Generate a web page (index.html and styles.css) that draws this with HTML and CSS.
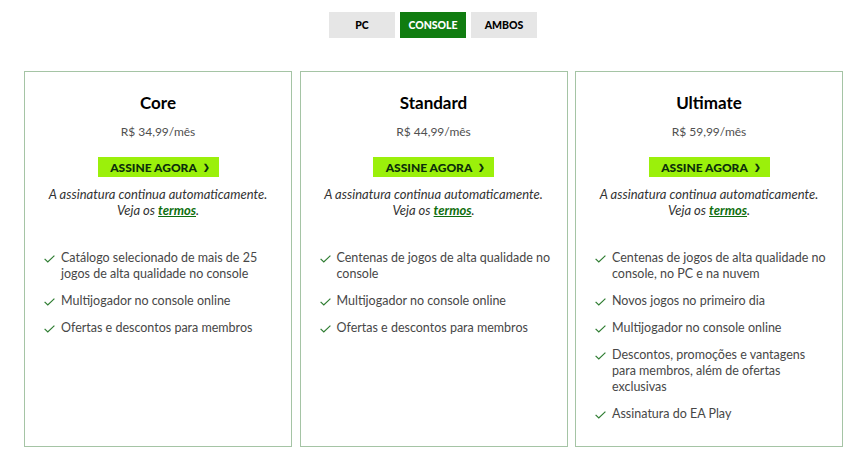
FILE: index.html
```html
<!DOCTYPE html>
<html lang="pt-BR">
<head>
    <meta charset="UTF-8">
    <meta name="viewport" content="width=device-width, initial-scale=1.0">
    <title>Planos</title>
    <link rel="stylesheet" href="styles.css">
</head>
<body>
    <div class="tabs">
        <button class="tab">PC</button>
        <button class="tab active">CONSOLE</button>
        <button class="tab">AMBOS</button>
    </div>

    <div class="plans">
        <div class="plan">
            <h2>Core</h2>
            <p class="price">R$ 34,99/mês</p>
            <a href="#" class="subscribe">ASSINE AGORA <span class="chev">&#x276F;</span></a>
            <p class="note">A assinatura continua automaticamente.<br>Veja os <a href="#">termos</a>.</p>
            <ul class="features">
                <li><svg class="check" viewBox="0 0 11 8"><polyline points="0.6,3.8 3.8,7 10.4,0.6"/></svg><span>Catálogo selecionado de mais de 25 jogos de alta qualidade no console</span></li>
                <li><svg class="check" viewBox="0 0 11 8"><polyline points="0.6,3.8 3.8,7 10.4,0.6"/></svg><span>Multijogador no console online</span></li>
                <li><svg class="check" viewBox="0 0 11 8"><polyline points="0.6,3.8 3.8,7 10.4,0.6"/></svg><span>Ofertas e descontos para membros</span></li>
            </ul>
        </div>
        <div class="plan">
            <h2>Standard</h2>
            <p class="price">R$ 44,99/mês</p>
            <a href="#" class="subscribe">ASSINE AGORA <span class="chev">&#x276F;</span></a>
            <p class="note">A assinatura continua automaticamente.<br>Veja os <a href="#">termos</a>.</p>
            <ul class="features">
                <li><svg class="check" viewBox="0 0 11 8"><polyline points="0.6,3.8 3.8,7 10.4,0.6"/></svg><span>Centenas de jogos de alta qualidade no console</span></li>
                <li><svg class="check" viewBox="0 0 11 8"><polyline points="0.6,3.8 3.8,7 10.4,0.6"/></svg><span>Multijogador no console online</span></li>
                <li><svg class="check" viewBox="0 0 11 8"><polyline points="0.6,3.8 3.8,7 10.4,0.6"/></svg><span>Ofertas e descontos para membros</span></li>
            </ul>
        </div>
        <div class="plan">
            <h2>Ultimate</h2>
            <p class="price">R$ 59,99/mês</p>
            <a href="#" class="subscribe">ASSINE AGORA <span class="chev">&#x276F;</span></a>
            <p class="note">A assinatura continua automaticamente.<br>Veja os <a href="#">termos</a>.</p>
            <ul class="features">
                <li><svg class="check" viewBox="0 0 11 8"><polyline points="0.6,3.8 3.8,7 10.4,0.6"/></svg><span>Centenas de jogos de alta qualidade no console, no PC e na nuvem</span></li>
                <li><svg class="check" viewBox="0 0 11 8"><polyline points="0.6,3.8 3.8,7 10.4,0.6"/></svg><span>Novos jogos no primeiro dia</span></li>
                <li><svg class="check" viewBox="0 0 11 8"><polyline points="0.6,3.8 3.8,7 10.4,0.6"/></svg><span>Multijogador no console online</span></li>
                <li><svg class="check" viewBox="0 0 11 8"><polyline points="0.6,3.8 3.8,7 10.4,0.6"/></svg><span>Descontos, promoções e vantagens para membros, além de ofertas exclusivas</span></li>
                <li><svg class="check" viewBox="0 0 11 8"><polyline points="0.6,3.8 3.8,7 10.4,0.6"/></svg><span>Assinatura do EA Play</span></li>
            </ul>
        </div>
    </div>
</body>
</html>
```

FILE: styles.css
```css
body {
    margin: 0;
    font-family: Lato, "Open Sans", sans-serif;
    color: #333;
    background: #fff;
}
.tabs {
    display: flex;
    justify-content: center;
    gap: 5px;
    padding-top: 12px;
    padding-left: 6px;
}
.tab {
    width: 66px;
    height: 26px;
    border: none;
    background: #e6e6e6;
    color: #000;
    font-family: inherit;
    font-weight: 900;
    font-size: 10.5px;
    padding: 0;
}
.tab.active {
    background: #107c10;
    color: #fff;
}
.plans {
    display: grid;
    grid-template-columns: repeat(3, 268px);
    gap: 7.5px;
    padding: 0 18px 0 24px;
    margin-top: 33px;
}
.plan {
    border: 1px solid #a5c4a5;
    height: 376px;
    box-sizing: border-box;
    padding: 19px 19px 0;
    text-align: center;
}
.plan h2 {
    margin: 0;
    font-size: 17px;
    line-height: 24px;
    color: #000;
    font-weight: 700;
}
.price {
    margin: 9px 0 0;
    font-size: 12px;
    line-height: 16px;
    color: #505050;
}
.subscribe {
    display: flex;
    width: 121px;
    height: 20px;
    margin: 17px auto 0;
    align-items: center;
    justify-content: center;
    gap: 6px;
    background: #9bf00b;
    color: #0b2e0b;
    font-size: 12px;
    font-weight: 900;
    text-decoration: none;
    padding-left: 4px;
    box-sizing: border-box;
}
.chev {
    font-size: 8px;
}
.note {
    margin: 9px 0 0;
    font-size: 13px;
    line-height: 16px;
    font-style: italic;
    color: #333;
}
.note a {
    color: #0e6e0e;
    font-weight: 700;
}
.features {
    list-style: none;
    margin: 32px -7px 0 0;
    padding: 0;
    text-align: left;
}
.features li {
    display: flex;
    align-items: flex-start;
    gap: 6px;
    margin-bottom: 11px;
    font-size: 12.5px;
    line-height: 16px;
    color: #474747;
}
.check {
    flex: none;
    width: 11px;
    height: 8px;
    margin-top: 5px;
    fill: none;
    stroke: #2f7d32;
    stroke-width: 1.2;
}
```
